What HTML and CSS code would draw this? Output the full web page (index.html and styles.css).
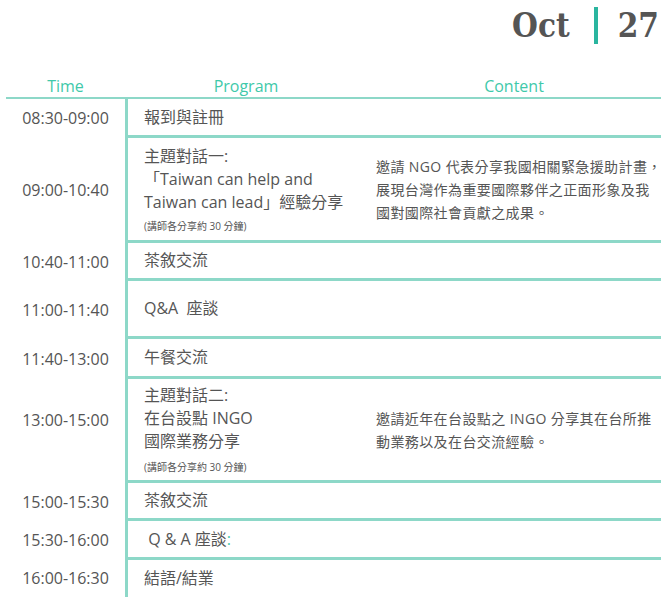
FILE: index.html
```html
<!DOCTYPE html>
<html lang="zh-Hant">
<head>
<meta charset="utf-8">
<title>Agenda Oct 27</title>
<link rel="stylesheet" href="styles.css">
</head>
<body>
<div class="page">
  <div class="date">
    <span class="date-month">Oct</span>
    <span class="date-bar"></span>
    <span class="date-day">27</span>
  </div>

  <div class="head">
    <div class="head-cell">Time</div>
    <div class="head-cell">Program</div>
    <div class="head-cell">Content</div>
  </div>

  <div class="row row-m">
    <div class="time">08:30-09:00</div>
    <div class="prog">報到與註冊</div>
    <div class="content"></div>
  </div>

  <div class="row row-talk1">
    <div class="time">09:00-10:40</div>
    <div class="prog">主題對話一:<br>「Taiwan can help and<br>Taiwan can lead」經驗分享<div class="note note-a">(講師各分享約 30 分鐘)</div></div>
    <div class="content">邀請 NGO 代表分享我國相關緊急援助計畫，<br>展現台灣作為重要國際夥伴之正面形象及我<br>國對國際社會貢獻之成果。</div>
  </div>

  <div class="row row-s">
    <div class="time">10:40-11:00</div>
    <div class="prog">茶敘交流</div>
    <div class="content"></div>
  </div>

  <div class="row row-xl">
    <div class="time">11:00-11:40</div>
    <div class="prog">Q&amp;A&nbsp; 座談</div>
    <div class="content"></div>
  </div>

  <div class="row row-l">
    <div class="time">11:40-13:00</div>
    <div class="prog">午餐交流</div>
    <div class="content"></div>
  </div>

  <div class="row row-talk2">
    <div class="time time-raised">13:00-15:00</div>
    <div class="prog">主題對話二:<br>在台設點 INGO<br>國際業務分享<div class="note note-b">(講師各分享約 30 分鐘)</div></div>
    <div class="content">邀請近年在台設點之 INGO 分享其在台所推<br>動業務以及在台交流經驗。</div>
  </div>

  <div class="row row-s">
    <div class="time">15:00-15:30</div>
    <div class="prog">茶敘交流</div>
    <div class="content"></div>
  </div>

  <div class="row row-m">
    <div class="time">15:30-16:00</div>
    <div class="prog">&nbsp;Q &amp; A 座談<span class="accent">:</span></div>
    <div class="content"></div>
  </div>

  <div class="row row-l row-last">
    <div class="time">16:00-16:30</div>
    <div class="prog">結語/結業</div>
    <div class="content"></div>
  </div>
</div>
</body>
</html>
```

FILE: styles.css
```css
html, body {
  margin: 0;
  padding: 0;
  background: #ffffff;
}

body {
  font-family: "Open Sans", "Noto Sans CJK TC", sans-serif;
  color: #555555;
}

.page {
  width: 655px;
  padding: 0 6px;
}

/* date header */
.date {
  height: 60px;
  display: flex;
  justify-content: flex-end;
  align-items: flex-start;
  padding-right: 2px;
  box-sizing: border-box;
}

.date-month,
.date-day {
  font-family: "DejaVu Serif Condensed", "DejaVu Serif", serif;
  font-weight: bold;
  font-size: 33px;
  line-height: 37px;
  color: #555555;
  margin-top: 7px;
}

.date-bar {
  width: 4px;
  height: 37px;
  margin: 7px 20px 0 24px;
  background: #2ab59f;
}

/* table header */
.head {
  display: grid;
  grid-template-columns: 119px 242px minmax(0, 1fr);
  padding-top: 15px;
  border-bottom: 2px solid #8dd8c8;
}

.head-cell {
  text-align: center;
  font-size: 16px;
  line-height: 22px;
  color: #3fc9aa;
}

/* rows */
.row {
  display: grid;
  grid-template-columns: 119px 242px minmax(0, 1fr);
  font-size: 16px;
  line-height: 23px;
}

.time {
  align-self: center;
  text-align: center;
  font-size: 16px;
}

.time-raised {
  padding-bottom: 22px;
}

.prog {
  border-left: 3px solid #8dd8c8;
  border-bottom: 3px solid #8dd8c8;
  padding-left: 16px;
  font-size: 16px;
  color: #555555;
}

.content {
  border-bottom: 3px solid #8dd8c8;
  padding-left: 9px;
  display: flex;
  align-items: center;
  font-size: 14px;
  letter-spacing: 0.4px;
  line-height: 23px;
  white-space: nowrap;
  overflow: hidden;
}

.row-last .prog,
.row-last .content {
  border-bottom: none;
}

.row-s .prog { padding-top: 6px; padding-bottom: 6px; }
.row-m .prog { padding-top: 7px; padding-bottom: 6px; }
.row-l .prog { padding-top: 7px; padding-bottom: 7px; }
.row-xl .prog { padding-top: 16px; padding-bottom: 16px; }
.row-talk1 .prog { padding-top: 7px; padding-bottom: 4px; }
.row-talk2 .prog { padding-top: 5px; padding-bottom: 3px; }

.note {
  font-size: 10px;
  line-height: 20px;
}

.note-a { margin-top: 2px; }
.note-b { margin-top: 4px; }

.accent {
  color: #3fc9aa;
}
```
